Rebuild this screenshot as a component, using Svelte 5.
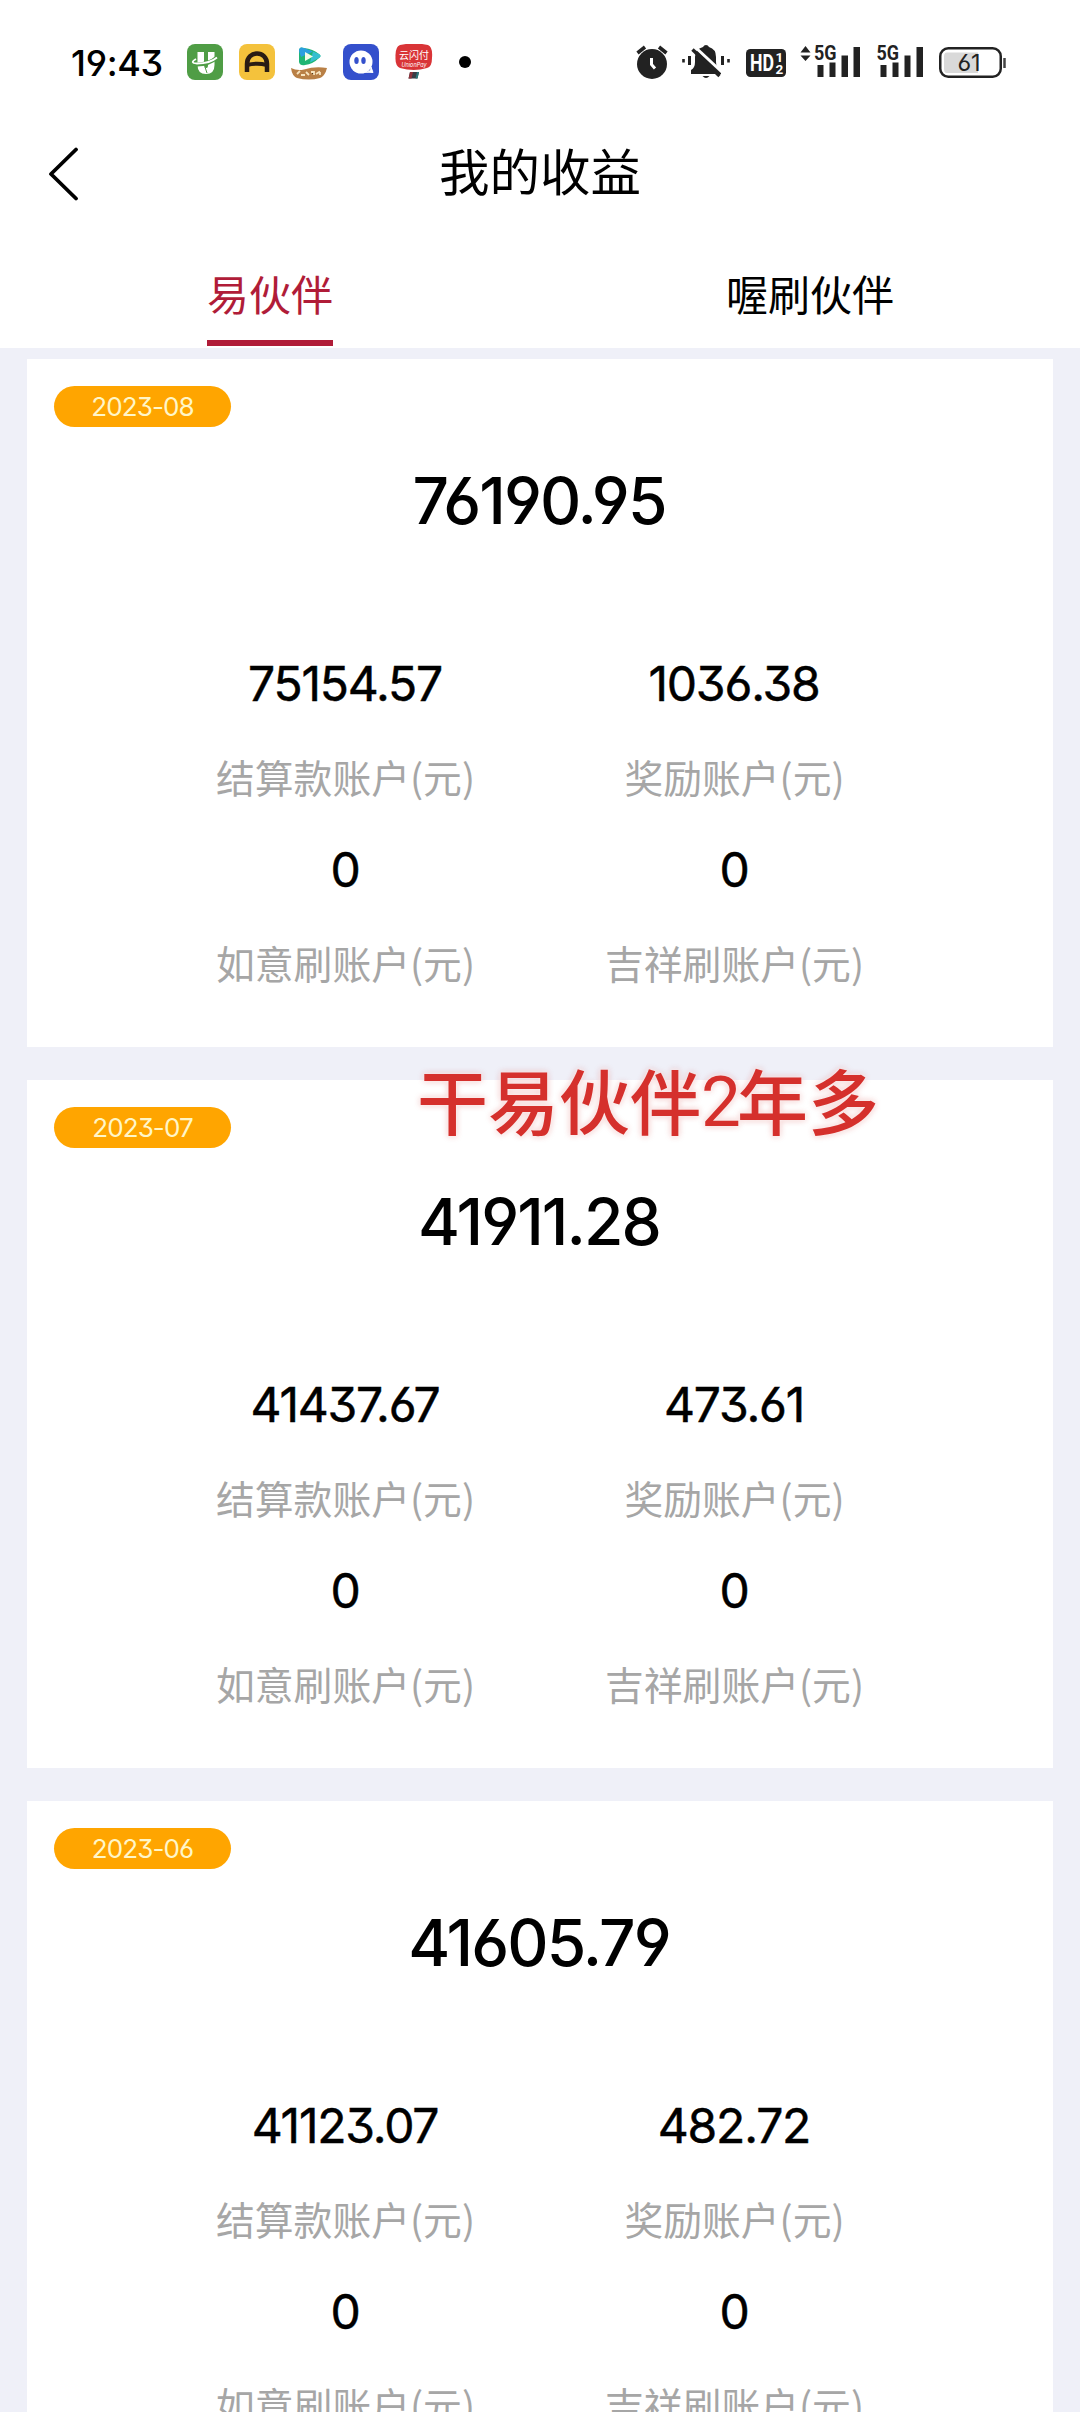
<script lang="ts">
  type Account = { amount: string; label: string };
  type Month = { month: string; total: string; accounts: Account[] };

  const tabs = ['易伙伴', '喔刷伙伴'];
  let activeTab = $state(0);

  function makeMonth(month: string, total: string, settle: string, reward: string): Month {
    return {
      month,
      total,
      accounts: [
        { amount: settle, label: '结算款账户(元)' },
        { amount: reward, label: '奖励账户(元)' },
        { amount: '0', label: '如意刷账户(元)' },
        { amount: '0', label: '吉祥刷账户(元)' }
      ]
    };
  }

  const months: Month[] = [
    makeMonth('2023-08', '76190.95', '75154.57', '1036.38'),
    makeMonth('2023-07', '41911.28', '41437.67', '473.61'),
    makeMonth('2023-06', '41605.79', '41123.07', '482.72')
  ];
</script>

<div class="screen">
  <div class="status-bar">
    <span class="time">19:43</span>
    <div class="apps">
      <svg width="36" height="36" viewBox="0 0 36 36">
        <rect width="36" height="36" rx="8" fill="#4f9d45" />
        <path d="M10.500 8H17V21Q17 24 19.500 24Q21 24 21 21V8H27.500V21Q27.500 30 19 30Q10.500 30 10.500 21Z" fill="#fff" />
        <path d="M9 15Q1 20 10 20.500Q22 20.500 30 13.500" fill="none" stroke="#4f9d45" stroke-width="4" />
        <path d="M9 15Q2 19 10 19.500Q23 19.500 30 13.500" fill="none" stroke="#fff" stroke-width="1.800" />
        <path d="M18 23L20 29" stroke="#4f9d45" stroke-width="1" />
      </svg>
      <svg width="36" height="36" viewBox="0 0 36 36">
        <rect width="36" height="36" rx="8" fill="#f4c23c" />
        <path d="M8 28V20C8 6 28 6 28 20V28" fill="none" stroke="#2a1c14" stroke-width="4.500" />
        <path d="M8 21Q18 18.500 28 21" fill="none" stroke="#2a1c14" stroke-width="4" />
      </svg>
      <svg width="36" height="36" viewBox="0 0 36 36">
        <path d="M8 7Q8 2 13 4Q22 5 28 10Q31 12 28 14Q22 20 14 21Q9 22 8 18Z" fill="#1fb573" />
        <path d="M8 7Q8 2 13 4L22 7.500L10 13Z" fill="#2b9fe0" />
        <path d="M22 7.500L28 10Q31 12 28 14L19 18.500Z" fill="#35bfd0" />
        <path d="M14 8L22 12.500L14 17Z" fill="#f3fbe6" />
        <path d="M0 24Q6 27 13 25.500Q24 22 36 24Q34 32 29 34Q18 37 6 34Q1 32 0 24Z" fill="#b98046" />
        <path d="M6 30L9 27M10 31H14M15 28L18 31M20 28H23V31M25 30L29 27.500M29 31V28" stroke="#f7e3be" stroke-width="1.800" />
      </svg>
      <svg width="36" height="36" viewBox="0 0 36 36">
        <rect width="36" height="36" rx="8" fill="#3450cc" />
        <circle cx="18" cy="18" r="11.500" fill="#fff" />
        <path d="M22 28Q28 29 28 23L30 28.500Z" fill="#fff" stroke="#fff" />
        <ellipse cx="13.500" cy="16.500" rx="2.200" ry="3.600" fill="#3450cc" />
        <ellipse cx="20.500" cy="16.500" rx="2.200" ry="3.600" fill="#3450cc" />
      </svg>
      <svg width="38" height="36" viewBox="0 0 38 36">
        <path d="M5 1Q19 -2 33 1Q38 3 37 14Q37 23 32 24Q19 28 5 24Q0 22 0.500 13Q0 3 5 1Z" fill="#d93437" />
        <text class="cjk" x="4" y="15" font-size="10" textLength="30" fill="#fff">云闪付</text>
        <text x="19" y="22.500" font-size="5.500" text-anchor="middle" font-style="italic" fill="#fff">UnionPay</text>
        <path d="M15 28H24L22.500 34.500H13.500Z" fill="#3a3c45" />
        <path d="M15 28H18L16.500 34.500H13.500Z" fill="#8f343c" />
        <path d="M22 28H24L22.500 34.500H20.500Z" fill="#2b777b" />
      </svg>
    </div>
    <span class="dot"></span>

    <div class="system">
      <svg width="32" height="44" viewBox="636 40 32 44">
        <circle cx="652" cy="64" r="15" fill="#222" />
        <path d="M637.500 53L645 47M666.500 53L659 47" stroke="#222" stroke-width="3.600" />
        <path d="M651.500 58V64.500L655 68.500" fill="none" stroke="#fff" stroke-width="3" />
      </svg>
      <svg width="50" height="44" viewBox="682 40 50 44">
        <path d="M691 74V70Q695 68 695 62V57Q695 49 703 47Q704 45 706 45Q708 45 709 47Q716 49 716 57V62Q716 68 721 70V74Z" fill="#222" />
        <path d="M702.500 76H709.500Q706 80 702.500 76Z" fill="#222" />
        <path d="M694 46L723 73" stroke="#fff" stroke-width="3" />
        <path d="M692.500 49.500L719.500 76" stroke="#222" stroke-width="3.400" />
        <path d="M683.500 59V62.500M728.500 59V62.500" stroke="#222" stroke-width="2.600" />
        <path d="M689.500 56V65M722.500 56V65" stroke="#222" stroke-width="3" />
      </svg>
      <svg width="40" height="44" viewBox="746 40 40 44">
        <rect x="746" y="49" width="40" height="28" rx="4.500" fill="#222" />
        <text class="narrow" x="750" y="71" font-size="23" textLength="24" lengthAdjust="spacingAndGlyphs" fill="#fff">HD</text>
        <text class="narrow" x="775.500" y="62" font-size="13.500" fill="#fff">1</text>
        <text class="narrow" x="775.500" y="74" font-size="13.500" fill="#fff">2</text>
      </svg>
      <svg width="62" height="44" viewBox="800 40 62 44">
        <path d="M800.500 52.500L805.500 46L810.500 52.500ZM800.500 55.500L805.500 61L810.500 55.500Z" fill="#222" />
        <text class="narrow" x="814" y="60" font-size="21" textLength="22.500" lengthAdjust="spacingAndGlyphs" fill="#222">5G</text>
        <path d="M817.500 65H823.500V77H817.500ZM829.500 62.500H835.500V77H829.500ZM841.500 55.500H848V77H841.500ZM853.500 47H860V77H853.500Z" fill="#222" />
      </svg>
      <svg width="48" height="44" viewBox="876 40 48 44">
        <text class="narrow" x="876.500" y="60" font-size="21" textLength="22.500" lengthAdjust="spacingAndGlyphs" fill="#222">5G</text>
        <path d="M880.500 65H886.500V77H880.500ZM892.500 62.500H898.500V77H892.500ZM904.500 55.500H910.500V77H904.500ZM916.500 47H923V77H916.500Z" fill="#222" />
      </svg>
      <svg width="68" height="44" viewBox="938 40 68 44">
        <rect x="940.250" y="48.250" width="60.500" height="28.500" rx="8" fill="#fff" stroke="#222" stroke-width="2.500" />
        <path d="M978 52.500V73H947Q944 73 944 69V56.500Q944 52.500 947 52.500Z" fill="#d9d9d9" />
        <path d="M1004.500 58V68" stroke="#444" stroke-width="2.500" />
        <text class="num" x="969" y="71" font-size="23.500" text-anchor="middle" fill="#222">61</text>
      </svg>
    </div>
  </div>

  <header>
    <button class="back" aria-label="返回">
      <svg width="32" height="54" viewBox="0 0 32 54">
        <path d="M29 2.500L4 27L29 51.500" fill="none" stroke="#000" stroke-width="3.800" stroke-linecap="round" stroke-linejoin="round" />
      </svg>
    </button>
    <h1>我的收益</h1>
  </header>

  <nav>
    {#each tabs as tab, i}
      <button class="tab" class:active={activeTab === i} onclick={() => (activeTab = i)}>
        <span>{tab}</span>
      </button>
    {/each}
  </nav>

  <main>
    {#each months as item}
      <section class="card">
        <div class="badge">{item.month}</div>
        <div class="total">{item.total}</div>
        <div class="accounts">
          {#each item.accounts as account}
            <div class="account">
              <div class="amount">{account.amount}</div>
              <div class="label">{account.label}</div>
            </div>
          {/each}
        </div>
      </section>
    {/each}
  </main>

  <div class="caption">干易伙伴<span>2</span>年多</div>
</div>

<style>
  :global(body) {
    background: #eff0f8;
  }

  .screen {
    position: relative;
    width: 1080px;
    height: 2412px;
    overflow: hidden;
    background: #eff0f8;
    color: #000;
    font-family: 'Inter', 'Noto Sans CJK SC', sans-serif;
  }

  .time,
  .num,
  .badge,
  .total,
  .amount {
    font-family: 'Inter', sans-serif;
    font-feature-settings: 'cv03', 'cv04', 'cv09';
  }

  .cjk,
  h1,
  .tab,
  .label,
  .caption {
    font-family: 'Noto Sans CJK SC', sans-serif;
  }

  .narrow {
    font-family: 'Roboto', 'Liberation Sans', sans-serif;
    font-weight: 700;
  }

  svg {
    display: block;
  }

  button {
    padding: 0;
    border: none;
    background: none;
    color: inherit;
  }

  .status-bar {
    display: flex;
    align-items: center;
    height: 124px;
    padding: 0 74px 0 71px;
    box-sizing: border-box;
    background: #fff;
  }

  .time {
    width: 116px;
    padding-top: 1px;
    font-size: 36px;
    font-weight: 500;
    letter-spacing: -0.3px;
    white-space: nowrap;
  }

  .apps {
    display: flex;
    gap: 16px;
  }

  .dot {
    width: 12px;
    height: 12px;
    margin-left: 26px;
    border-radius: 50%;
    background: #000;
  }

  .system {
    display: flex;
    gap: 14px;
    margin-left: auto;
  }

  header {
    display: grid;
    grid-template-columns: 120px 1fr 120px;
    align-items: center;
    height: 100px;
    background: #fff;
  }

  .back {
    padding-left: 47px;
  }

  h1 {
    margin: 0;
    font-size: 50.500px;
    font-weight: 400;
    line-height: 91px;
    height: 100px;
    text-align: center;
  }

  nav {
    display: grid;
    grid-template-columns: 1fr 1fr;
    height: 124px;
    background: #fff;
  }

  .tab {
    display: flex;
    justify-content: center;
    font-size: 42px;
  }

  .tab span {
    height: 122px;
    box-sizing: border-box;
    border-bottom: 6px solid transparent;
    line-height: 138px;
  }

  .tab.active {
    color: #b01c38;
  }

  .tab.active span {
    border-color: #b01c38;
  }

  main {
    display: flex;
    flex-direction: column;
    gap: 33px;
    padding: 11px 27px 0;
  }

  .card {
    flex: none;
    height: 688px;
    padding-top: 27px;
    box-sizing: border-box;
    background: #fff;
  }

  .badge {
    width: 177px;
    height: 41px;
    margin-left: 27px;
    border-radius: 21px;
    background: #ffa500;
    color: #fff6c8;
    font-size: 26px;
    letter-spacing: -0.9px;
    line-height: 41px;
    text-align: center;
  }

  .total {
    margin-top: 24px;
    padding-right: 2px;
    font-size: 64px;
    font-weight: 500;
    letter-spacing: -1.900px;
    line-height: 100px;
    text-align: center;
  }

  .accounts {
    display: grid;
    grid-template-columns: 389px 389px;
    grid-auto-rows: 186px;
    justify-content: center;
    margin-top: 98px;
  }

  .account {
    text-align: center;
  }

  .amount {
    padding-right: 1px;
    font-size: 48px;
    font-weight: 400;
    letter-spacing: -1.200px;
    line-height: 70px;
    -webkit-text-stroke: 0.5px #000;
  }

  .label {
    margin-top: 27px;
    color: #a6a6a6;
    font-size: 38.800px;
    font-weight: 400;
    line-height: 60px;
  }

  .caption {
    position: absolute;
    top: 1048px;
    left: 417px;
    color: #d5302c;
    font-size: 71px;
    font-weight: 500;
    line-height: 100px;
    white-space: nowrap;
    text-shadow: 0 0 4px #fff, 0 0 6px rgba(213, 48, 44, 0.400);
  }

  .caption span {
    position: relative;
    top: -3px;
    margin-right: -4px;
    font-family: 'Roboto', sans-serif;
    font-size: 71px;
    font-weight: 400;
  }
</style>
